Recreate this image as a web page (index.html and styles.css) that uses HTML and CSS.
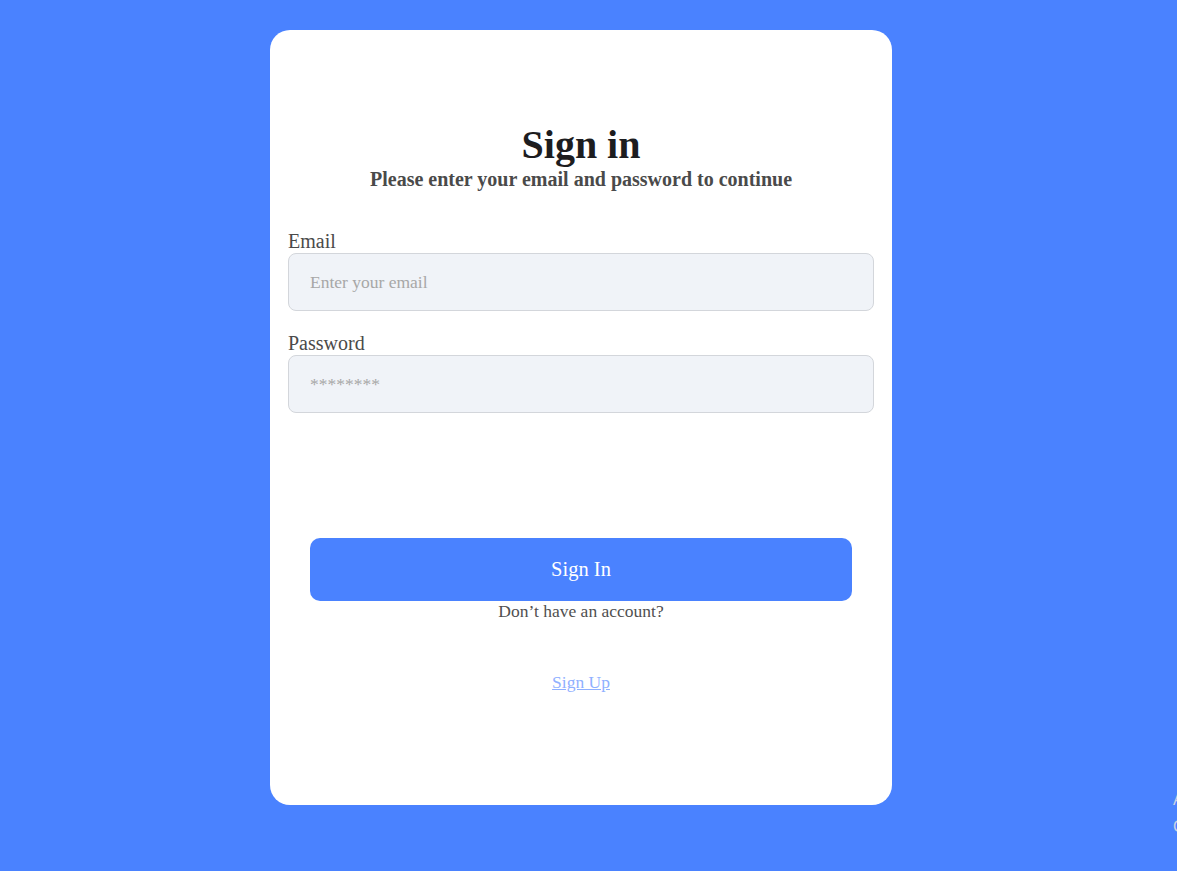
FILE: index.html
```html
<!DOCTYPE html>
<html lang="en">
<head>
<meta charset="utf-8">
<title>Sign in</title>
<link rel="stylesheet" href="styles.css">
</head>
<body>
<div class="page">
  <form class="card">
    <div class="header">
      <h1 class="title">Sign in</h1>
      <p class="subtitle">Please enter your email and password to continue</p>
    </div>
    <label class="label" for="email">Email</label>
    <input class="field" id="email" type="email" placeholder="Enter your email">
    <label class="label label-pw" for="pw">Password</label>
    <input class="field" id="pw" type="password" placeholder="********">
    <button class="btn" type="button">Sign In</button>
    <p class="note">Don’t have an account?</p>
    <a class="link" href="#">Sign Up</a>
  </form>
  <div class="edge">A<br>C</div>
</div>
</body>
</html>
```
FILE: styles.css
```css
html, body {
  margin: 0;
  padding: 0;
}
body {
  background: #4a82ff;
  font-family: "Liberation Serif", "Times New Roman", serif;
  overflow: hidden;
}
.page {
  position: relative;
  height: 871px;
  padding: 30px 0 0 270px;
  box-sizing: border-box;
}
.card {
  width: 622px;
  height: 775px;
  box-sizing: border-box;
  background: #fff;
  border-radius: 20px;
  padding: 92px 18px 0;
  display: flex;
  flex-direction: column;
}
.header {
  text-align: center;
}
.title {
  margin: 0;
  font-size: 40px;
  line-height: 46px;
  font-weight: bold;
  color: #1d1d1f;
}
.subtitle {
  margin: 0;
  font-size: 20px;
  line-height: 22px;
  font-weight: bold;
  color: #4a4a4a;
}
.label {
  margin-top: 40px;
  font-size: 20px;
  line-height: 23px;
  color: #4a4a4a;
}
.label-pw {
  margin-top: 21px;
}
.field {
  height: 58px;
  box-sizing: border-box;
  border: 1px solid #d3d6db;
  border-radius: 8px;
  background: #f0f3f8;
  padding: 0 21px;
  font-family: "Liberation Serif", "Times New Roman", serif;
  font-size: 17.5px;
  color: #333;
  outline: none;
}
.field::placeholder {
  color: #a7a7a7;
}
.btn {
  margin: 125px 22px 0;
  height: 63px;
  border: none;
  border-radius: 10px;
  background: #4a82ff;
  color: #fff;
  font-family: "Liberation Serif", "Times New Roman", serif;
  font-size: 20.5px;
  cursor: pointer;
}
.note {
  margin: 0;
  text-align: center;
  font-size: 17.5px;
  line-height: 21px;
  color: #505050;
}
.link {
  align-self: center;
  margin-top: 50px;
  font-size: 17.5px;
  line-height: 21px;
  color: #8fb0ff;
}
.edge {
  position: absolute;
  left: 1173px;
  top: 786px;
  font-family: "Liberation Sans", Arial, sans-serif;
  font-size: 16px;
  line-height: 27px;
  color: #c8d2e6;
}
```
